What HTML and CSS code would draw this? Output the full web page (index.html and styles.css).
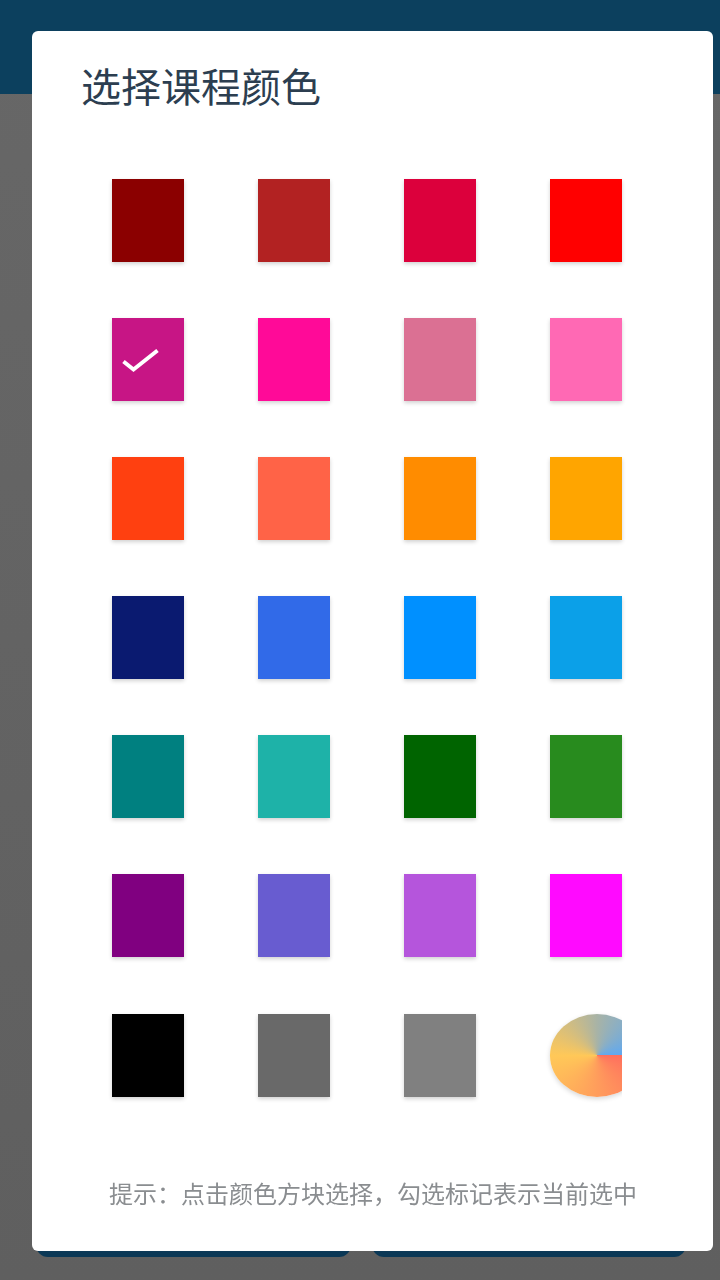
FILE: index.html
```html
<!DOCTYPE html>
<html lang="zh-CN">
<head>
  <meta charset="UTF-8" />
  <meta name="viewport" content="width=device-width, initial-scale=1.0"/>
  <title>选择课程颜色</title>
  <link rel="stylesheet" href="styles.css">
</head>
<body>

<div class="page">
  <header class="top-bar"></header>
  <div class="page-body"></div>
  <div class="bottom-buttons">
    <div class="bottom-btn"></div>
    <div class="bottom-btn"></div>
  </div>
</div>

<div class="overlay">
  <div class="dialog">
    <h3 class="dialog-title">选择课程颜色</h3>
    <div class="color-grid">
      <div class="swatch c-darkred"></div>
      <div class="swatch c-firebrick"></div>
      <div class="swatch c-crimson"></div>
      <div class="swatch c-red"></div>

      <div class="swatch c-violetred">
        <svg class="check" width="72" height="83" viewBox="0 0 72 83">
          <path d="M11.5 43.5 L21.5 51.5 L45.5 32.5" fill="none" stroke="#fff" stroke-width="4"/>
        </svg>
      </div>
      <div class="swatch c-deeppink"></div>
      <div class="swatch c-palepink"></div>
      <div class="swatch c-hotpink"></div>

      <div class="swatch c-orangered"></div>
      <div class="swatch c-tomato"></div>
      <div class="swatch c-darkorange"></div>
      <div class="swatch c-orange"></div>

      <div class="swatch c-navy"></div>
      <div class="swatch c-royal"></div>
      <div class="swatch c-dodger"></div>
      <div class="swatch c-sky"></div>

      <div class="swatch c-teal"></div>
      <div class="swatch c-seagreen"></div>
      <div class="swatch c-darkgreen"></div>
      <div class="swatch c-forest"></div>

      <div class="swatch c-purple"></div>
      <div class="swatch c-slate"></div>
      <div class="swatch c-orchid"></div>
      <div class="swatch c-magenta"></div>

      <div class="swatch c-black"></div>
      <div class="swatch c-dimgray"></div>
      <div class="swatch c-gray"></div>
      <div class="swatch swatch-custom"><div class="wheel"></div></div>
    </div>
    <p class="hint">提示：点击颜色方块选择，勾选标记表示当前选中</p>
  </div>
</div>

</body>
</html>
```

FILE: styles.css
```css
html, body { margin: 0; padding: 0; height: 100%; }
body { font-family: "Noto Sans CJK SC", "Noto Sans", sans-serif; background: #646464; overflow: hidden; }

.page { display: flex; flex-direction: column; height: 1280px; background: linear-gradient(#676767, #5f5f5f); }
.top-bar { height: 94px; background: #0c405e; }
.page-body { flex: 1; }
.bottom-buttons { display: flex; gap: 21px; padding: 0 34px 23px 36px; }
.bottom-btn { flex: 1; height: 56px; background: #0b3856; border-radius: 12px; }

.overlay { position: fixed; top: 0; left: 0; right: 0; bottom: 0; padding: 31px 7px 29px 32px; box-sizing: border-box; }
.dialog { height: 1220px; background: #fff; border-radius: 6px; position: relative; }
.dialog-title { margin: 0; padding: 28px 0 0 49px; font-size: 40px; line-height: 52px; font-weight: 400; color: #2c3e50; }

.color-grid { display: grid; grid-template-columns: repeat(4, 72px); column-gap: 74px; row-gap: 56.1px; padding: 68px 0 0 80px; }
.swatch { height: 83px; box-shadow: 0 2px 4px rgba(0,0,0,0.18); }
.check { display: block; }
.swatch-custom { box-shadow: none; clip-path: inset(-8px 0 -8px -8px); }
.wheel { width: 94px; height: 83px; border-radius: 50%; box-shadow: 0 2px 5px rgba(0,0,0,0.16); background: conic-gradient(from 90deg, #ff6f5e, #ff9d5c 90deg, #ffc858 180deg, #a8b3a6 270deg, #5ea8f2 360deg); }

.hint { margin: 0; position: absolute; left: 0; right: 0; top: 1146px; padding-left: 77px; font-size: 24px; line-height: 32px; color: #8a8d90; white-space: nowrap; }

.c-darkred { background: #8b0000; }
.c-firebrick { background: #b22222; }
.c-crimson { background: #dc003c; }
.c-red { background: #ff0000; }
.c-violetred { background: #c71585; }
.c-deeppink { background: #ff0a98; }
.c-palepink { background: #db7093; }
.c-hotpink { background: #ff69b4; }
.c-orangered { background: #ff4010; }
.c-tomato { background: #ff6347; }
.c-darkorange { background: #ff8c00; }
.c-orange { background: #ffa500; }
.c-navy { background: #0a1a70; }
.c-royal { background: #316ae8; }
.c-dodger { background: #0090ff; }
.c-sky { background: #0ba0e8; }
.c-teal { background: #008080; }
.c-seagreen { background: #1eb2a8; }
.c-darkgreen { background: #006400; }
.c-forest { background: #288b1e; }
.c-purple { background: #800080; }
.c-slate { background: #685cd0; }
.c-orchid { background: #b555dc; }
.c-magenta { background: #ff0aff; }
.c-black { background: #000; }
.c-dimgray { background: #696969; }
.c-gray { background: #808080; }
```
